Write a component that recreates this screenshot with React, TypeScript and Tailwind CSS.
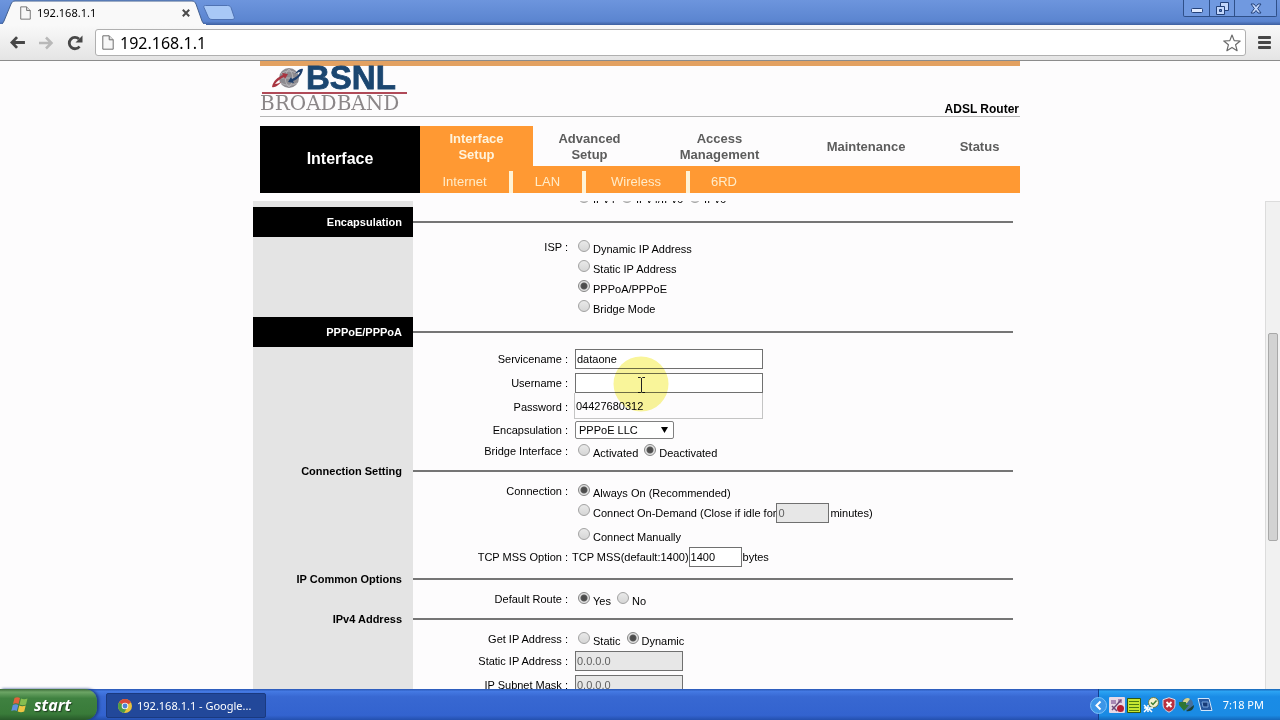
import type { ReactNode } from 'react';

const radioClass =
  'appearance-none w-3 h-3 shrink-0 rounded-full border border-[#a2a2a2] bg-[linear-gradient(#e9e9e9,#d6d6d6)] checked:border-[#858585] checked:bg-[radial-gradient(circle,#4c4c4c_0_2px,#5a5a5a_3px,#e2e2e2_4px)]';

const inputClass = 'h-5 border border-[#707070] bg-white px-px text-[11px] leading-4 outline-none disabled:bg-[#e7e7e7] disabled:text-[#606060]';

function PageIcon({ className }: { className: string }) {
  return (
    <svg viewBox="0 0 12 15" className={className} fill="#f7f7f7" stroke="#6f6f6f" strokeWidth="1">
      <path d="M.8.8h6.4l4 4v9.4H.8z" />
      <path d="M7.2.8v4h4" fill="#dcdcdc" />
    </svg>
  );
}

function Radio({ name, label, checked, children }: { name: string; label: string; checked?: boolean; children?: ReactNode }) {
  return (
    <span className="flex items-center">
      <label className={children ? 'flex items-center gap-[3px] pb-1' : 'flex items-center gap-[3px]'}>
        <input type="radio" name={name} defaultChecked={checked} className={radioClass + ' mb-[2px]'} />
        <span className="pt-[3px]">{label}</span>
      </label>
      {children}
    </span>
  );
}

function Heading({ title, dark }: { title: string; dark?: boolean }) {
  return (
    <div className="grid grid-cols-[160px_1fr] items-center">
      <h2
        className={
          dark
            ? 'flex h-[30px] items-center justify-end bg-black pr-[11px] text-[11px] font-bold text-white'
            : 'flex h-5 items-center justify-end bg-[#e4e4e4] pr-[11px] text-[11px] font-bold text-black'
        }
      >
        {title}
      </h2>
      <div className="h-[2px] bg-[#757575]" />
    </div>
  );
}

function Row({ label, id, tall, children }: { label?: string; id: string; tall?: boolean; children: ReactNode }) {
  return (
    <div className={tall ? 'grid h-6 grid-cols-[160px_155px_1fr]' : 'grid h-5 grid-cols-[160px_155px_1fr]'}>
      <div className="bg-[#e4e4e4]" />
      <div className="flex items-center justify-end">
        {label && <label htmlFor={id}>{label} :</label>}
      </div>
      <div className="flex items-center pl-1">{children}</div>
    </div>
  );
}

function Radios({ label, children }: { label: string; children: ReactNode }) {
  return (
    <div role="radiogroup" aria-label={label} className="flex items-center gap-[6px] pl-[6px]">
      {children}
    </div>
  );
}

function TitleBar() {
  return (
    <header className="flex h-[25px] shrink-0 items-start bg-[linear-gradient(#6d95dd,#5b85d0_85%,#3d5f9f)]">
      <div className="relative flex h-[25px] w-[206px] items-center">
        <svg viewBox="0 0 206 25" className="absolute inset-0 h-full w-full">
          <path d="M0 25c2 0 3-2 4-4l7-17c1-2 2-3 4-3h177c2 0 3 1 4 3l6 17c1 2 2 4 4 4z" fill="#f9f9f9" stroke="#43608f" strokeWidth="1" />
          <path d="M0 24.500h206" stroke="#f9f9f9" />
        </svg>
        <div className="relative flex w-full items-center pr-4 pl-5">
          <PageIcon className="h-[14px] w-[11px]" />
          <span className="ml-[6px] flex-1 font-['Noto_Sans',sans-serif] text-[11px] leading-4">192.168.1.1</span>
          <button aria-label="Close tab">
            <svg viewBox="0 0 8 8" className="h-2 w-2" stroke="#4b4b4b" strokeWidth="2">
              <path d="M.8.800l6.400 6.400M7.200.800L.8 7.200" />
            </svg>
          </button>
        </div>
      </div>
      <button aria-label="New tab" className="-ml-[3px] pt-[5px]">
        <svg viewBox="0 0 32 16" className="h-4 w-8">
          <path d="M2.500.500h22c2 0 3 1 3.500 2l3 9c1 2 0 3-2 3H9c-2 0-3-1-4-3L1 2.500C.500 1 1 .500 2.500.500z" fill="#a8c8f6" stroke="#4f72b3" />
        </svg>
      </button>
      <div className="mr-[3px] ml-auto flex h-[17px] overflow-hidden rounded-b-[2px] border border-t-0 border-[#2f5089] bg-[#7099e0]">
        <button aria-label="Minimize" className="flex w-[25px] items-end justify-center pb-[3px]">
          <svg viewBox="0 0 12 5" className="h-[5px] w-3">
            <rect x=".5" y=".5" width="11" height="4" rx="1" fill="#dfeaff" stroke="#24427a" />
          </svg>
        </button>
        <button aria-label="Restore" className="flex w-[26px] items-center justify-center border-x border-[#2f5089]">
          <svg viewBox="0 0 13 13" className="h-[13px] w-[13px]" fill="#c3d7fb" stroke="#24427a">
            <path d="M4.500.500h8v8h-8z" />
            <path d="M.5 4.500h8v8h-8z" />
            <path d="M3.500 7.500h2v2h-2z" fill="#5b7fc0" />
          </svg>
        </button>
        <button aria-label="Close" className="flex w-[41px] items-center justify-center">
          <svg viewBox="0 0 12 11" className="h-[11px] w-3">
            <path d="M1 1h3l2 2.500L8 1h3L7.700 5.500 11 10H8L6 7.500 4 10H1l3.300-4.500z" fill="#c3d7fb" stroke="#24427a" />
          </svg>
        </button>
      </div>
    </header>
  );
}

function Toolbar() {
  return (
    <div className="flex h-9 shrink-0 items-center border-b border-[#8c8c8c] bg-[linear-gradient(#f9f9f9,#e4e4e4)] px-[9px]">
      <button aria-label="Back" className="w-[17px]">
        <svg viewBox="0 0 18 14" className="h-[13px] w-[17px]" fill="none" stroke="#474747" strokeWidth="3">
          <path d="M8.500 1.200L3 7l5.500 5.800M3 7h14" />
        </svg>
      </button>
      <button aria-label="Forward" className="ml-3 w-[16px]" disabled>
        <svg viewBox="0 0 16 14" className="h-[14px] w-4" fill="none" stroke="#b8b8b8" strokeWidth="2.500">
          <path d="M8 1.500L13.500 7 8 12.500M13 7H1" />
        </svg>
      </button>
      <button aria-label="Reload" className="ml-[13px] w-4">
        <svg viewBox="0 0 16 16" className="h-4 w-4">
          <path d="M12.500 11.500A5.700 5.700 0 1 1 12 4" fill="none" stroke="#474747" strokeWidth="2.800" />
          <path d="M15.500.500v7h-7z" fill="#474747" />
        </svg>
      </button>
      <div className="ml-3 flex h-[27px] flex-1 items-center rounded-[3px] border border-[#b0b0b0] bg-white pr-1 pl-[6px]">
        <PageIcon className="h-[15px] w-3" />
        <input
          aria-label="Address"
          defaultValue="192.168.1.1"
          className="ml-[6px] flex-1 bg-transparent font-['Noto_Sans',sans-serif] text-base leading-6 outline-none"
        />
        <button aria-label="Bookmark">
          <svg viewBox="0 0 18 18" className="h-[18px] w-[18px]" fill="#fff" stroke="#6b6b6b" strokeWidth="1.200" strokeLinejoin="round">
            <path d="M9 1l2.200 5.600 6 .4-4.600 3.800 1.500 5.900L9 13.400l-5.100 3.300 1.500-5.900L.8 7l6-.4z" />
          </svg>
        </button>
      </div>
      <button aria-label="Menu" className="ml-3">
        <svg viewBox="0 0 13 13" className="h-[13px] w-[13px]" fill="#474747">
          <rect y="0" width="13" height="3" rx="1" />
          <rect y="5" width="13" height="3" rx="1" />
          <rect y="10" width="13" height="3" rx="1" />
        </svg>
      </button>
    </div>
  );
}

function Logo() {
  return (
    <svg viewBox="0 0 148 48" className="h-12 w-[148px] overflow-visible" role="img" aria-label="BSNL Broadband">
      <circle cx="29" cy="12" r="10" fill="#8d8a8f" />
      <path d="M21 8c5-4 11-4 16 0M20 12h18M21 17c5 3 11 3 16 0M29 3c-5 5-5 13 0 18M29 3c5 5 5 13 0 18" fill="none" stroke="#c3c1c6" strokeWidth=".7" />
      <path d="M12 21c1-6 6-10 11-12l-1-2 6 1-3 5-1-2c-4 2-7 4-9 7 2 0 4-1 6-2-2 3-6 6-9 5z" fill="#a83440" />
      <path d="M43 3c-1 6-5 10-10 12l1 2-6-1 3-5 1 2c4-2 7-4 8-7-2 0-3 1-5 2 2-3 5-6 8-5z" fill="#1f3f6c" />
      <text x="46" y="23" fill="#1b4670" stroke="#1b4670" strokeWidth=".8" className="font-['Liberation_Sans',Arial,sans-serif] text-[33px] font-bold">
        BSNL
      </text>
      <path d="M2 27h145" stroke="#b04a58" strokeWidth="2" />
      <text x="0" y="44" fill="#8b8688" className="font-['DejaVu_Serif','DejaVu_Sans',serif] text-[20px]">
        BROADBAND
      </text>
    </svg>
  );
}

const mainTabs = ['Advanced Setup', 'Access Management', 'Maintenance', 'Status'];

function RouterHeader() {
  return (
    <div className="mx-auto h-[140px] w-full max-w-[760px] shrink-0">
      <div className="h-[5px] bg-[#e3a161]" />
      <div className="flex h-[51px] items-start justify-between border-b border-[#b5b5b5]">
        <Logo />
        <span className="self-end pr-px text-xs leading-[14px] font-bold">ADSL Router</span>
      </div>
      <div className="mt-[9px] flex h-[67px]">
        <h1 className="flex w-40 items-center justify-center bg-black pb-[2px] text-base font-bold text-white">Interface</h1>
        <div className="flex flex-1 flex-col">
          <nav className="grid h-10 grid-cols-[113px_113px_147px_146px_1fr] text-center text-[13px] leading-4 font-bold text-[#5c5c5c]">
            <a href="#interface" className="flex items-center justify-center bg-[#ff9933] px-5 pt-[2px] text-[#fff3dc]">
              Interface Setup
            </a>
            {mainTabs.map((tab) => (
              <a key={tab} href={'#' + tab} className="flex items-center justify-center px-5 pt-[2px]">
                {tab}
              </a>
            ))}
          </nav>
          <nav className="flex flex-1 items-end bg-[#ff9933] text-center text-[13px] text-[#ffecc9]">
            <a href="#internet" className="h-[22px] w-[93px] border-r-4 border-[#fff3d6] leading-[22px]">Internet</a>
            <a href="#lan" className="h-[22px] w-[73px] border-r-4 border-[#fff3d6] leading-[22px]">LAN</a>
            <a href="#wireless" className="h-[22px] w-[104px] border-r-4 border-[#fff3d6] leading-[22px]">Wireless</a>
            <a href="#6rd" className="h-[22px] w-[68px] leading-[22px]">6RD</a>
          </nav>
        </div>
      </div>
    </div>
  );
}

function PointerMark() {
  return (
    <svg viewBox="0 0 56 56" className="pointer-events-none absolute top-[-17px] left-[38px] z-20 h-14 w-14 mix-blend-multiply">
      <circle cx="28" cy="28" r="27.500" fill="#f9f59a" />
      <path d="M25 21.500h2.500l1 1 1-1H32M28.500 22v14M25 36.500h2.500l1-1 1 1H32" fill="none" stroke="#222" />
    </svg>
  );
}

function RouterForm() {
  return (
    <form className="mx-auto w-full max-w-[760px] text-[11px] leading-4">
      <div className="flex h-[6px] flex-col justify-end overflow-hidden">
        <Row id="ipver">
          <Radios label="IP Version">
            <Radio name="ipver" label="IPv4" />
            <Radio name="ipver" label="IPv4/IPv6" />
            <Radio name="ipver" label="IPv6" />
          </Radios>
        </Row>
      </div>

      <Heading title="Encapsulation" dark />
      <Row label="ISP" id="isp">
        <Radios label="ISP"><Radio name="isp" label="Dynamic IP Address" /></Radios>
      </Row>
      <Row id="isp">
        <Radios label="ISP"><Radio name="isp" label="Static IP Address" /></Radios>
      </Row>
      <Row id="isp">
        <Radios label="ISP"><Radio name="isp" label="PPPoA/PPPoE" checked /></Radios>
      </Row>
      <Row id="isp">
        <Radios label="ISP"><Radio name="isp" label="Bridge Mode" /></Radios>
      </Row>

      <Heading title="PPPoE/PPPoA" dark />
      <Row label="Servicename" id="service" tall>
        <input id="service" defaultValue="dataone" className={inputClass + ' ml-[3px] w-[188px]'} />
      </Row>
      <Row label="Username" id="user" tall>
        <div className="relative ml-[3px]">
          <input id="user" className={inputClass + ' block w-[188px] border-[#5d6670]'} />
          {/* autofill list, covers the password field */}
          <ul className="absolute top-5 -left-px z-10 h-[26px] w-[189px] border border-t-0 border-[#c4c4c4] bg-[#fdfcfd] px-px pt-px leading-6">
            <li>04427680312</li>
          </ul>
          <PointerMark />
        </div>
      </Row>
      <Row label="Password" id="pass" tall>
        <input id="pass" type="password" className={inputClass + ' ml-[3px] w-[188px]'} />
      </Row>
      <div className="grid h-[22px] grid-cols-[160px_155px_1fr]">
        <div className="bg-[#e4e4e4]" />
        <label htmlFor="encap" className="flex items-center justify-end">Encapsulation :</label>
        <div className="flex items-center pl-1">
          <div className="relative ml-[3px]">
            <select id="encap" className="block h-[18px] w-[99px] appearance-none rounded-[2px] border border-[#808080] bg-white pl-[3px] text-[11px] leading-4">
              <option>PPPoE LLC</option>
              <option>PPPoE VC-Mux</option>
              <option>PPPoA LLC</option>
              <option>PPPoA VC-Mux</option>
            </select>
            <svg viewBox="0 0 7 6" className="pointer-events-none absolute top-[6px] right-[6px] h-[6px] w-[7px]">
              <path d="M0 0h7L3.500 6z" />
            </svg>
          </div>
        </div>
      </div>
      <Row label="Bridge Interface" id="bridge">
        <Radios label="Bridge Interface">
          <Radio name="bridge" label="Activated" />
          <Radio name="bridge" label="Deactivated" checked />
        </Radios>
      </Row>

      <Heading title="Connection Setting" />
      <Row label="Connection" id="conn">
        <Radios label="Connection"><Radio name="conn" label="Always On (Recommended)" checked /></Radios>
      </Row>
      <Row id="conn" tall>
        <Radios label="Connection">
          <Radio name="conn" label="Connect On-Demand (Close if idle for">
            <input aria-label="Idle minutes" defaultValue="0" disabled className={inputClass + ' mr-px w-[53px]'} />
            <span>minutes)</span>
          </Radio>
        </Radios>
      </Row>
      <Row id="conn">
        <Radios label="Connection"><Radio name="conn" label="Connect Manually" /></Radios>
      </Row>
      <Row label="TCP MSS Option" id="mss" tall>
        <span>TCP MSS(default:1400)</span>
        <input id="mss" defaultValue="1400" className={inputClass + ' mr-px w-[53px]'} />
        <span>bytes</span>
      </Row>

      <Heading title="IP Common Options" />
      <Row label="Default Route" id="route">
        <Radios label="Default Route">
          <Radio name="route" label="Yes" checked />
          <Radio name="route" label="No" />
        </Radios>
      </Row>

      <Heading title="IPv4 Address" />
      <Row label="Get IP Address" id="getip">
        <Radios label="Get IP Address">
          <Radio name="getip" label="Static" />
          <Radio name="getip" label="Dynamic" checked />
        </Radios>
      </Row>
      <Row label="Static IP Address" id="staticip" tall>
        <input id="staticip" defaultValue="0.0.0.0" disabled className={inputClass + ' ml-[3px] w-[108px]'} />
      </Row>
      <Row label="IP Subnet Mask" id="mask" tall>
        <input id="mask" defaultValue="0.0.0.0" disabled className={inputClass + ' ml-[3px] w-[108px]'} />
      </Row>
    </form>
  );
}

function TrayIcons() {
  return (
    <div className="flex items-center gap-[2px]">
      <svg viewBox="0 0 16 16" className="h-4 w-4">
        <rect width="16" height="16" rx="1" fill="#e6d9e6" />
        <path d="M2 3h5v4H2zM9 2h4v4H9z" fill="#a889b5" />
        <path d="M3 13L12 3M3 9l5 5" stroke="#6d4a78" strokeWidth="1.500" />
        <circle cx="11.500" cy="11.500" r="3.500" fill="#b51f33" />
      </svg>
      <svg viewBox="0 0 14 16" className="h-4 w-[14px]">
        <path d="M.5 1.500h13v14H.5z" fill="#c6e532" stroke="#31580e" />
        <path d="M2 4.500h10M2 7.500h10M2 10.500h10M2 13.500h10" stroke="#4d7c12" />
      </svg>
      <svg viewBox="0 0 17 16" className="h-4 w-[17px]">
        <circle cx="10.500" cy="5.500" r="5" fill="#f5f2cf" stroke="#6c7a42" />
        <path d="M8 5.500l2 2 3.500-4" fill="none" stroke="#3f7f35" strokeWidth="1.500" />
        <path d="M1 8l3 3M1 15l4-4M9 15l-3-3M5 8v3h-4M5 15v-3M10 11H6" stroke="#fff" strokeWidth="1.500" fill="none" />
      </svg>
      <svg viewBox="0 0 14 16" className="h-4 w-[14px]">
        <path d="M7 .7l6 2v5c0 4-3 6-6 7.500C4 13.700 1 11.700 1 7.700v-5z" fill="#b8303f" stroke="#ded9e4" />
        <path d="M4.500 5l5 5M9.500 5l-5 5" stroke="#fff" strokeWidth="1.800" />
      </svg>
      <svg viewBox="0 0 17 16" className="h-4 w-[17px]">
        <circle cx="9" cy="7" r="6" fill="#47719c" />
        <path d="M5 4c2-3 5-4 7-2L9 6 6 7z" fill="#d8d490" />
        <path d="M1 5h7v3h3l-5 6-5-6z" fill="#2f7535" />
        <path d="M8 14l8-6c0 4-3 7-8 6z" fill="#1f3f34" />
      </svg>
      <svg viewBox="0 0 16 16" className="h-4 w-4">
        <path d="M1 1.500h11l3 12H4z" fill="#27579d" stroke="#d3e6fa" />
        <path d="M5 5h6v5H6z" fill="#173b78" stroke="#76a4dc" />
      </svg>
    </div>
  );
}

function Taskbar() {
  return (
    <footer className="flex h-[31px] shrink-0 items-stretch bg-[linear-gradient(#2a57b5,#4479e3_8%,#3868d2_25%,#3363cf_85%,#2450ae)] font-['Noto_Sans',sans-serif] text-[11px] text-white">
      <button className="flex w-[97px] items-center gap-[5px] rounded-r-xl bg-[linear-gradient(#3c6c39,#6ca565_10%,#3f8140_30%,#397b39_80%,#285a2a)] pl-[11px] shadow-[2px_0_3px_#1b3b83]">
        <svg viewBox="0 0 18 17" className="h-[17px] w-[18px]">
          <path d="M3.500 2c2-1.200 4-.9 5.500 0L7.500 8C6 7.100 4 7 2 8z" fill="#e2613c" />
          <path d="M10 2.500c2 1 4 1 6.500 0L15 8.500c-2 1-4.500.9-6.500 0z" fill="#86bd50" />
          <path d="M1.800 9c2-1 4-.9 5.500 0l-1.500 6c-1.500-1-3.500-1-5.500 0z" fill="#5f8fe0" />
          <path d="M8.200 9.500c2 1 4.200 1 6.500 0l-1.500 6c-2 1-4.500 1-6.500 0z" fill="#efc544" />
        </svg>
        <span className="font-['Open_Sans',sans-serif] text-base leading-5 font-bold italic [text-shadow:1px_1px_1px_#1f3f1f]">start</span>
      </button>
      <button className="mt-1 mb-[2px] ml-[9px] flex w-40 items-center gap-[5px] rounded-[2px] border border-[#1a3a80] bg-[#22489a] pt-px pl-[11px]">
        <svg viewBox="0 0 14 14" className="h-[14px] w-[14px]">
          <circle cx="7" cy="7" r="7" fill="#e9c33d" />
          <path d="M7 7L1 3.500A7 7 0 0 1 13 3.500z" fill="#d84a3a" />
          <path d="M7 7L1 3.500A7 7 0 0 0 6 13.900L9 9z" fill="#4c9b47" />
          <circle cx="7" cy="7" r="3.300" fill="#f4f4f4" />
          <circle cx="7" cy="7" r="2.400" fill="#4d83d6" />
        </svg>
        <span>192.168.1.1 - Google...</span>
      </button>
      <div className="ml-auto flex items-center border-l border-[#12408f] bg-[linear-gradient(#1a64b5,#2ba3f3_8%,#1a8ce6_25%,#1a8be4_85%,#1468bb)] pt-px pr-4">
        <button aria-label="Show hidden icons" className="-ml-[9px] mr-[2px]">
          <svg viewBox="0 0 17 17" className="h-[17px] w-[17px]">
            <circle cx="8.500" cy="8.500" r="8" fill="#3c96e8" stroke="#7cc2f7" />
            <path d="M10.500 4.500l-4 4 4 4" fill="none" stroke="#fff" strokeWidth="2" />
          </svg>
        </button>
        <TrayIcons />
        <time className="ml-[10px]">7:18 PM</time>
      </div>
    </footer>
  );
}

export default function App() {
  return (
    <div className="flex h-screen flex-col overflow-hidden bg-[#fdfcfd] font-['Liberation_Sans',Arial,sans-serif] text-black">
      <TitleBar />
      <Toolbar />
      <RouterHeader />
      <div className="flex min-h-0 flex-1">
        <main className="min-w-0 flex-1 overflow-hidden pl-px">
          <RouterForm />
        </main>
        {/* Scrollbar */}
        <div className="w-[15px] border-t border-l border-[#dcdcdc] bg-[#f1f1f1] pt-[131px] pl-[2px]">
          <div className="h-52 w-[10px] rounded-[2px] border border-[#a8a8a8] bg-[#d2d2d2]" />
        </div>
      </div>
      <Taskbar />
    </div>
  );
}
